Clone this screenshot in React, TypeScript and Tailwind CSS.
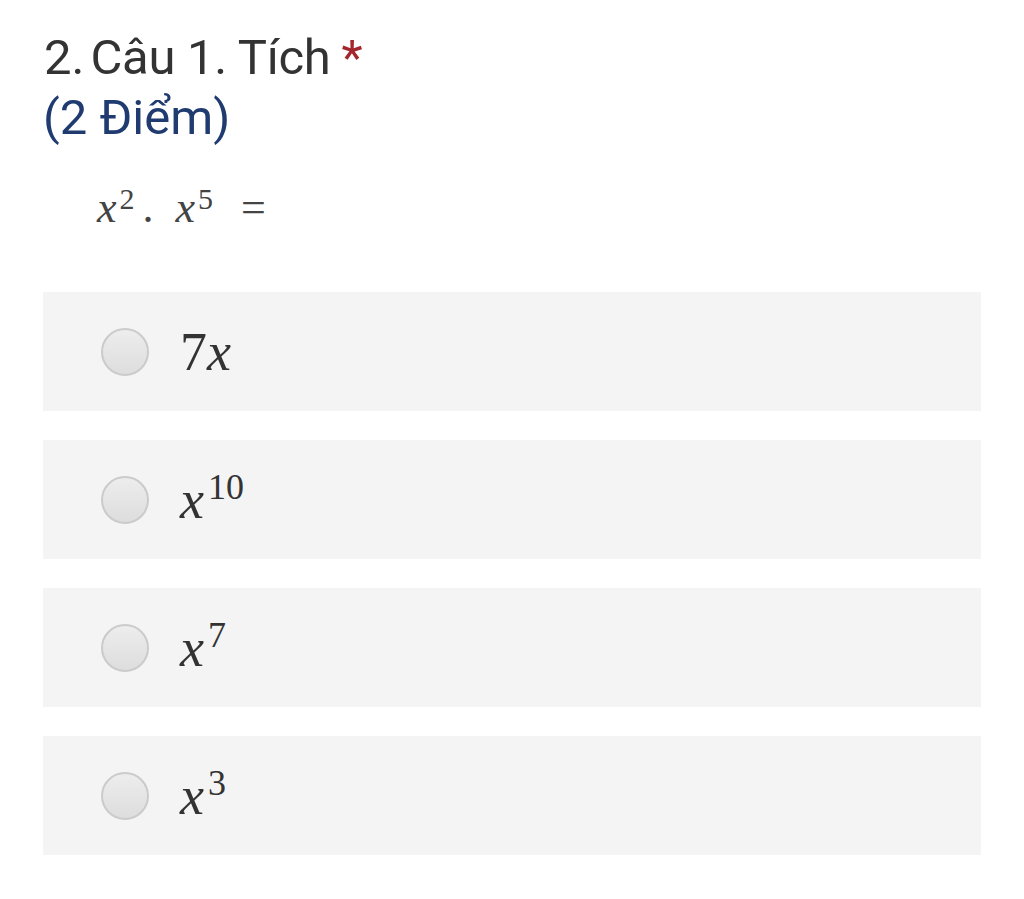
import React from "react";

const serif = { fontFamily: '"Liberation Serif", "Times New Roman", serif' };

function Radio() {
  return (
    <span className="block h-[48px] w-[48px] shrink-0 rounded-full border-2 border-[#cbcbcb] bg-gradient-to-b from-[#ededed] to-[#dddddd]" />
  );
}

function X({ sup }: { sup?: string }) {
  return (
    <span className="inline-flex items-start">
      <span className="italic">x</span>
      {sup && <span className="text-[36px] leading-none -mt-[4px] ml-[4px] not-italic">{sup}</span>}
    </span>
  );
}

function Option({ children }: { children: React.ReactNode }) {
  return (
    <div className="flex h-[119px] items-center bg-[#f4f4f4] pl-[58px]">
      <Radio />
      <div className="ml-[31px] text-[54px] leading-none text-[#333]" style={serif}>
        {children}
      </div>
    </div>
  );
}

export default function App() {
  return (
    <div className="min-h-[899px] w-[1024px] bg-white px-[43px] pt-[28px]" style={{ fontFamily: 'Roboto, "Noto Sans", sans-serif' }}>
      <div className="flex text-[49px] leading-[60px] text-[#333]">
        <span className="ml-[1px]">2.</span>
        <span className="ml-[6px] tracking-[-0.3px]">Câu 1. Tích</span>
        <span className="ml-[11px] text-[#a4262c]">*</span>
      </div>
      <div className="text-[49px] leading-[60px] text-[#1f3b70]">(2 Điểm)</div>
      <div className="mt-[38px] ml-[54px] flex items-baseline text-[44px] leading-none text-[#444]" style={serif}>
        <span className="italic">x</span>
        <span className="text-[30px] relative -top-[13px] ml-[3px]">2</span>
        <span className="ml-[8px]">.</span>
        <span className="italic ml-[22px]">x</span>
        <span className="text-[30px] relative -top-[13px] ml-[3px]">5</span>
        <span className="ml-[28px]">=</span>
      </div>
      <div className="mt-[62px] flex flex-col gap-[29px]">
        <Option>
          <span>7</span>
          <span className="italic">x</span>
        </Option>
        <Option>
          <X sup="10" />
        </Option>
        <Option>
          <X sup="7" />
        </Option>
        <Option>
          <X sup="3" />
        </Option>
      </div>
    </div>
  );
}
